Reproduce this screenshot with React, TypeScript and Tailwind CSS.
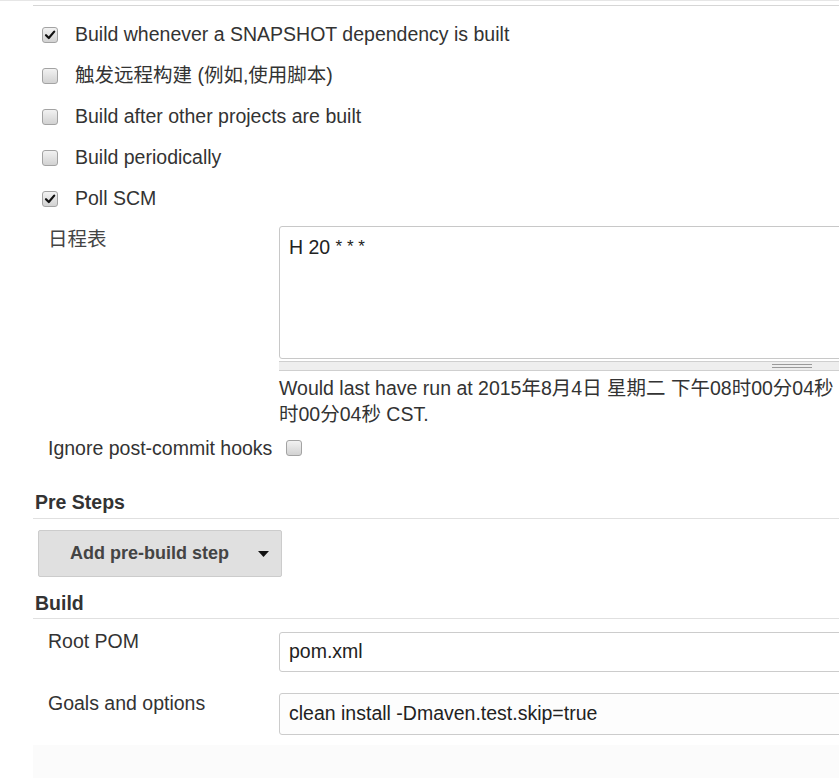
const FONT = "font-['Liberation_Sans','Noto_Sans_CJK_SC',sans-serif]";

function Box({ checked }: { checked?: boolean }) {
  return (
    <span className="flex h-4 w-4 shrink-0 items-center justify-center rounded-[3px] border border-[#a3a3a3] bg-gradient-to-b from-[#f2f2f2] to-[#d2d2d2]">
      {checked && (
        <svg width="12" height="12" viewBox="0 0 12 12">
          <path d="M2 6.2 L4.8 9 L10.2 2.6" fill="none" stroke="#111" strokeWidth="2.2" strokeLinecap="round" strokeLinejoin="round" />
        </svg>
      )}
    </span>
  );
}

const triggers = [
  { label: "Build whenever a SNAPSHOT dependency is built", checked: true },
  { label: "触发远程构建 (例如,使用脚本)", checked: false },
  { label: "Build after other projects are built", checked: false },
  { label: "Build periodically", checked: false },
  { label: "Poll SCM", checked: true },
];

export default function App() {
  return (
    <div className={`relative h-[778px] w-[839px] overflow-hidden bg-white text-[19.5px] text-[#333] ${FONT}`}>
      <div className="h-px bg-[#e6e6e6]" />
      <div className="ml-[33px] mt-[4px] border-t border-[#d6d6d6] pt-[8px]">
        {/* trigger checkboxes */}
        {triggers.map((t) => (
          <div key={t.label} className="flex h-[41px] items-center gap-[17px] pl-[9px]">
            <Box checked={t.checked} />
            <span className="leading-none">{t.label}</span>
          </div>
        ))}

        {/* schedule */}
        <div className="mt-[7px] flex">
          <div className="w-[246px] shrink-0 pl-[15px] leading-[26px] text-[#444]">日程表</div>
          <div className="min-w-0 flex-1">
            <div className="h-[133px] w-[620px] rounded-[3px] border border-[#c8c8c8] bg-white px-[9px] pt-[7px] leading-[26px] text-[#222]">
              H 20 <span className="align-top text-[17px]">* * *</span>
            </div>
            <div className="relative mt-[2px] h-[10px] w-[620px] border-y border-[#cfcfcf] bg-[#eeeeee]">
              <div className="absolute left-[493px] top-[2px] h-[4px] w-[40px] border-y border-[#9a9a9a]" />
            </div>
            <div className="mt-[4px] whitespace-nowrap leading-[26px]">
              Would last have run at 2015年8月4日 星期二 下午08时00分04秒
            </div>
            <div className="whitespace-nowrap leading-[26px]">时00分04秒 CST.</div>
          </div>
        </div>

        <div className="mt-[8px] flex h-[26px] items-center gap-[14px] pl-[15px]">
          <span className="leading-[26px]">Ignore post-commit hooks</span>
          <Box />
        </div>

        {/* Pre Steps */}
        <div className="mt-[28px] border-b border-[#e0e0e0] pb-[3px] pl-[2px] font-bold leading-[26px]">Pre Steps</div>
        <div className="ml-[5px] mt-[11px] flex h-[47px] w-[244px] items-center rounded-[2px] border border-[#cccccc] bg-[#e0e0e0] pl-[31px] text-[18px] font-bold text-[#444]">
          <span>Add pre-build step</span>
          <svg className="ml-[29px]" width="11" height="6" viewBox="0 0 11 6">
            <path d="M0 0 H11 L5.5 6 Z" fill="#111" />
          </svg>
        </div>

        {/* Build */}
        <div className="mt-[13px] border-b border-[#e0e0e0] pb-[2px] pl-[2px] font-bold leading-[26px]">Build</div>
        <div className="mt-[9px] flex">
          <div className="w-[246px] shrink-0 pl-[15px] leading-[26px]">Root POM</div>
          <div className="mt-[4px] flex h-[40px] w-[620px] shrink-0 items-center rounded-[3px] border border-[#cccccc] bg-white px-[9px] text-[#222]">
            pom.xml
          </div>
        </div>
        <div className="mt-[18px] flex">
          <div className="w-[246px] shrink-0 pl-[15px] leading-[26px]">Goals and options</div>
          <div className="mt-[3px] flex h-[42px] w-[620px] shrink-0 items-center rounded-[3px] border border-[#cccccc] bg-[#fdfdfd] px-[9px] text-[#222]">
            clean install -Dmaven.test.skip=true
          </div>
        </div>
        <div className="mt-[10px] h-[40px] bg-[#fbfbfb]" />
      </div>
    </div>
  );
}
